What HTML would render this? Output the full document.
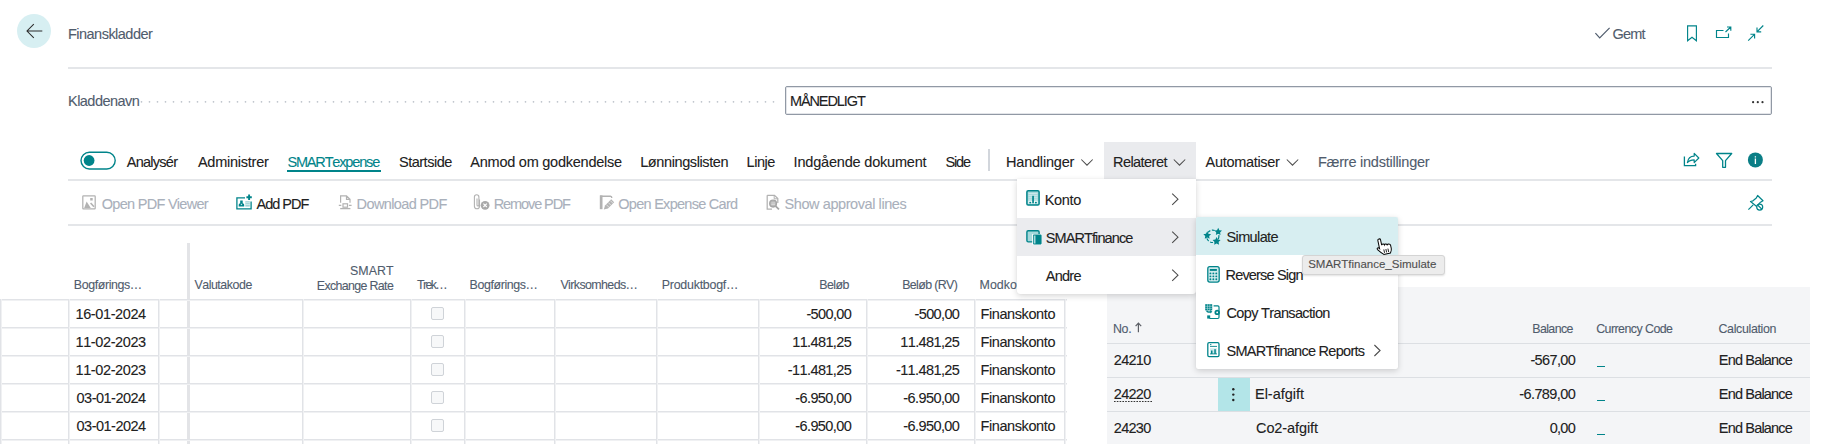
<!DOCTYPE html>
<html><head><meta charset="utf-8"><style>
html,body{margin:0;padding:0;background:#fff;width:1840px;height:444px;overflow:hidden;position:relative}
body{font-family:"Liberation Sans", sans-serif}
.t{position:absolute;white-space:nowrap;line-height:1.117;font-kerning:none;-webkit-text-stroke:0.1px currentColor}
</style></head><body>
<div style="position:absolute;left:17px;top:14px;width:34px;height:34px;border-radius:50%;background:#d7eff2"></div>
<svg style="position:absolute;left:0;top:0" width="60" height="60"><path d="M42.3 31H27.2 M33.8 24.2 L27 31 L33.8 37.8" fill="none" stroke="#2b2b2b" stroke-width="1.05"/></svg>
<div class="t" style="left:68.00px;top:26.00px;font-size:14.5px;color:#505c6d;letter-spacing:-0.521px;">Finanskladder</div>
<svg style="position:absolute;left:1580px;top:15px" width="200" height="40"><path d="M15.4 18.2 L19.7 22.9 L29.6 12.9" fill="none" stroke="#505c6d" stroke-width="1.2"/></svg>
<div class="t" style="left:1612.60px;top:26.00px;font-size:14.5px;color:#505c6d;letter-spacing:-0.874px;">Gemt</div>
<svg style="position:absolute;left:1680px;top:20px" width="100" height="30" fill="none" stroke="#00848a" stroke-width="1.15"><path d="M7.6 20.8 V5.9 H16.4 V20.8 L12 17.3 Z" stroke-linejoin="miter"/><path d="M43.5 10.5 H36.5 V17.5 H48.5 V13.5 M45.5 12 L50.8 7 M47 7 H50.8 V10.8"/><path d="M83.3 5.5 L77.2 11.6 M77 7.6 V11.8 H81.2 M68.2 20.6 L74.5 14.3 M70.4 14.2 H74.6 V18.4"/></svg>
<div style="position:absolute;left:68px;top:67px;width:1704px;height:2px;background:#e4e6e9;"></div>
<div class="t" style="left:68.00px;top:93.00px;font-size:14.5px;color:#505c6d;letter-spacing:-0.536px;">Kladdenavn</div>
<svg style="position:absolute;left:0;top:95px" width="800" height="12" fill="#bcc2ca"><circle cx="141.5" cy="6.8" r="0.85"/><circle cx="149.5" cy="6.8" r="0.85"/><circle cx="157.5" cy="6.8" r="0.85"/><circle cx="165.5" cy="6.8" r="0.85"/><circle cx="173.5" cy="6.8" r="0.85"/><circle cx="181.5" cy="6.8" r="0.85"/><circle cx="189.5" cy="6.8" r="0.85"/><circle cx="197.5" cy="6.8" r="0.85"/><circle cx="205.5" cy="6.8" r="0.85"/><circle cx="213.5" cy="6.8" r="0.85"/><circle cx="221.5" cy="6.8" r="0.85"/><circle cx="229.5" cy="6.8" r="0.85"/><circle cx="237.5" cy="6.8" r="0.85"/><circle cx="245.5" cy="6.8" r="0.85"/><circle cx="253.5" cy="6.8" r="0.85"/><circle cx="261.5" cy="6.8" r="0.85"/><circle cx="269.5" cy="6.8" r="0.85"/><circle cx="277.5" cy="6.8" r="0.85"/><circle cx="285.5" cy="6.8" r="0.85"/><circle cx="293.5" cy="6.8" r="0.85"/><circle cx="301.5" cy="6.8" r="0.85"/><circle cx="309.5" cy="6.8" r="0.85"/><circle cx="317.5" cy="6.8" r="0.85"/><circle cx="325.5" cy="6.8" r="0.85"/><circle cx="333.5" cy="6.8" r="0.85"/><circle cx="341.5" cy="6.8" r="0.85"/><circle cx="349.5" cy="6.8" r="0.85"/><circle cx="357.5" cy="6.8" r="0.85"/><circle cx="365.5" cy="6.8" r="0.85"/><circle cx="373.5" cy="6.8" r="0.85"/><circle cx="381.5" cy="6.8" r="0.85"/><circle cx="389.5" cy="6.8" r="0.85"/><circle cx="397.5" cy="6.8" r="0.85"/><circle cx="405.5" cy="6.8" r="0.85"/><circle cx="413.5" cy="6.8" r="0.85"/><circle cx="421.5" cy="6.8" r="0.85"/><circle cx="429.5" cy="6.8" r="0.85"/><circle cx="437.5" cy="6.8" r="0.85"/><circle cx="445.5" cy="6.8" r="0.85"/><circle cx="453.5" cy="6.8" r="0.85"/><circle cx="461.5" cy="6.8" r="0.85"/><circle cx="469.5" cy="6.8" r="0.85"/><circle cx="477.5" cy="6.8" r="0.85"/><circle cx="485.5" cy="6.8" r="0.85"/><circle cx="493.5" cy="6.8" r="0.85"/><circle cx="501.5" cy="6.8" r="0.85"/><circle cx="509.5" cy="6.8" r="0.85"/><circle cx="517.5" cy="6.8" r="0.85"/><circle cx="525.5" cy="6.8" r="0.85"/><circle cx="533.5" cy="6.8" r="0.85"/><circle cx="541.5" cy="6.8" r="0.85"/><circle cx="549.5" cy="6.8" r="0.85"/><circle cx="557.5" cy="6.8" r="0.85"/><circle cx="565.5" cy="6.8" r="0.85"/><circle cx="573.5" cy="6.8" r="0.85"/><circle cx="581.5" cy="6.8" r="0.85"/><circle cx="589.5" cy="6.8" r="0.85"/><circle cx="597.5" cy="6.8" r="0.85"/><circle cx="605.5" cy="6.8" r="0.85"/><circle cx="613.5" cy="6.8" r="0.85"/><circle cx="621.5" cy="6.8" r="0.85"/><circle cx="629.5" cy="6.8" r="0.85"/><circle cx="637.5" cy="6.8" r="0.85"/><circle cx="645.5" cy="6.8" r="0.85"/><circle cx="653.5" cy="6.8" r="0.85"/><circle cx="661.5" cy="6.8" r="0.85"/><circle cx="669.5" cy="6.8" r="0.85"/><circle cx="677.5" cy="6.8" r="0.85"/><circle cx="685.5" cy="6.8" r="0.85"/><circle cx="693.5" cy="6.8" r="0.85"/><circle cx="701.5" cy="6.8" r="0.85"/><circle cx="709.5" cy="6.8" r="0.85"/><circle cx="717.5" cy="6.8" r="0.85"/><circle cx="725.5" cy="6.8" r="0.85"/><circle cx="733.5" cy="6.8" r="0.85"/><circle cx="741.5" cy="6.8" r="0.85"/><circle cx="749.5" cy="6.8" r="0.85"/><circle cx="757.5" cy="6.8" r="0.85"/><circle cx="765.5" cy="6.8" r="0.85"/><circle cx="773.5" cy="6.8" r="0.85"/></svg>
<div style="position:absolute;left:785px;top:86px;width:985px;height:27px;border:1px solid #9199a5;border-radius:2px;background:#fff;box-shadow:inset 0 0 0 1px #e3e5e9"></div>
<div class="t" style="left:789.90px;top:93.00px;font-size:14.5px;color:#212121;letter-spacing:-1.092px;">MÅNEDLIGT</div>
<svg style="position:absolute;left:1748px;top:98px" width="20" height="8" fill="#333"><circle cx="5.1" cy="4.2" r="1.1"/><circle cx="9.8" cy="4.2" r="1.1"/><circle cx="14.5" cy="4.2" r="1.1"/></svg>
<svg style="position:absolute;left:70px;top:140px" width="60" height="40"><rect x="11" y="12.2" width="34.2" height="16.8" rx="8.4" fill="none" stroke="#00848a" stroke-width="1.4"/><circle cx="19.1" cy="20.5" r="5.4" fill="#00848a"/></svg>
<div class="t" style="left:126.80px;top:154.00px;font-size:14.5px;color:#212121;letter-spacing:-0.741px;">Analysér</div>
<div class="t" style="left:197.90px;top:154.00px;font-size:14.5px;color:#212121;letter-spacing:-0.239px;">Administrer</div>
<div class="t" style="left:287.40px;top:154.00px;font-size:14.5px;color:#00848a;letter-spacing:-1.155px;">SMARTexpense</div>
<div style="position:absolute;left:287px;top:170px;width:94px;height:2px;background:#00848a;"></div>
<div class="t" style="left:399.00px;top:154.00px;font-size:14.5px;color:#212121;letter-spacing:-0.495px;">Startside</div>
<div class="t" style="left:470.30px;top:154.00px;font-size:14.5px;color:#212121;letter-spacing:-0.238px;">Anmod om godkendelse</div>
<div class="t" style="left:640.20px;top:154.00px;font-size:14.5px;color:#212121;letter-spacing:-0.395px;">Lønningslisten</div>
<div class="t" style="left:746.60px;top:154.00px;font-size:14.5px;color:#212121;letter-spacing:-0.468px;">Linje</div>
<div class="t" style="left:793.60px;top:154.00px;font-size:14.5px;color:#212121;letter-spacing:-0.189px;">Indgående dokument</div>
<div class="t" style="left:945.40px;top:154.00px;font-size:14.5px;color:#212121;letter-spacing:-1.119px;">Side</div>
<div style="position:absolute;left:988px;top:149px;width:2px;height:22px;background:#d2d6dc;"></div>
<div style="position:absolute;left:1104px;top:142px;width:92px;height:37px;background:#eaebee;"></div>
<div class="t" style="left:1006.00px;top:154.00px;font-size:14.5px;color:#212121;letter-spacing:-0.200px;">Handlinger</div>
<div class="t" style="left:1113.00px;top:154.00px;font-size:14.5px;color:#212121;letter-spacing:-0.551px;">Relateret</div>
<div class="t" style="left:1205.60px;top:154.00px;font-size:14.5px;color:#212121;letter-spacing:-0.314px;">Automatiser</div>
<div class="t" style="left:1318.00px;top:154.00px;font-size:14.5px;color:#505c6d;letter-spacing:-0.245px;">Færre indstillinger</div>
<svg style="position:absolute;left:0;top:0" width="1840" height="444" fill="none" stroke="#4d4d4d" stroke-width="1.05"><path d="M1081.3 159.5 L1087 165.2 L1092.7 159.5" /><path d="M1173.8 159.5 L1179.5 165.2 L1185.2 159.5" /><path d="M1286.8 159.5 L1292.5 165.2 L1298.2 159.5" /></svg>
<svg style="position:absolute;left:1680px;top:148px" width="100" height="24" fill="none" stroke="#00848a" stroke-width="1.3"><path d="M4.4 8.5 V17.6 H15.6 V15.8"/><path d="M7.4 14.6 C8 10.5 10.5 8.1 14.2 8.1 V5.4 L18.8 10 L14.2 14.6 V11.8 C11.5 11.8 9 12.5 7.4 14.6 Z" stroke-linejoin="round" stroke-width="1.2"/><path d="M36.5 5.5 H51.7 L45.5 12.6 V19.3 H42.7 V12.6 Z" stroke-linejoin="round"/></svg>
<svg style="position:absolute;left:1740px;top:145px" width="30" height="30"><circle cx="15.4" cy="14.9" r="7.5" fill="#0a7e86"/><path d="M15.4 11.3 V12.5 M15.4 13.6 V19" stroke="#fff" stroke-width="1.3"/></svg>
<div style="position:absolute;left:68px;top:179px;width:1704px;height:2px;background:#e4e6e9;"></div>
<div class="t" style="left:101.80px;top:196.00px;font-size:14.5px;color:#a9b0bb;letter-spacing:-0.716px;">Open PDF Viewer</div>
<div class="t" style="left:256.50px;top:196.00px;font-size:14.5px;color:#212121;letter-spacing:-0.995px;">Add PDF</div>
<div class="t" style="left:356.60px;top:196.00px;font-size:14.5px;color:#a9b0bb;letter-spacing:-0.623px;">Download PDF</div>
<div class="t" style="left:493.70px;top:196.00px;font-size:14.5px;color:#a9b0bb;letter-spacing:-1.085px;">Remove PDF</div>
<div class="t" style="left:618.30px;top:196.00px;font-size:14.5px;color:#a9b0bb;letter-spacing:-0.726px;">Open Expense Card</div>
<div class="t" style="left:784.60px;top:196.00px;font-size:14.5px;color:#a9b0bb;letter-spacing:-0.423px;">Show approval lines</div>
<svg style="position:absolute;left:0;top:0" width="1840" height="444" fill="none" stroke="#b2b2b2" stroke-width="1.25"><rect x="82.8" y="195.8" width="12.4" height="13" rx="0.6"/><path d="M84.2 208 L86.6 201.5 L90.8 208 Z" fill="#b2b2b2" stroke="none"/><path d="M90.6 203 L94 206.8" stroke-width="1.6"/><rect x="90.2" y="198" width="2.5" height="2.5" fill="#b2b2b2" stroke="none"/><path d="M340.6 202.8 V195.8 H346.5 L350 199.3 V202.8 M346.5 195.8 V199.3 H350" stroke-width="1.2"/><path d="M338.8 205.4 H341.3 M348.9 205.4 H351.6" stroke-width="1.3"/><rect x="343" y="203.8" width="4.5" height="3.4" stroke-width="1.2"/><path d="M340.2 208.6 H350.4" stroke-width="1.3"/><path d="M479.5 199.5 V206.2 A2.55 2.55 0 0 1 474.4 206.2 V197 A2.25 2.25 0 0 1 478.9 197 V205 A0.95 0.95 0 0 1 477 205 V198.5" stroke-width="1.1"/><circle cx="485.1" cy="205.3" r="4.4" fill="#a9a9a9" stroke="none"/><path d="M483.4 203.6 L486.8 207 M486.8 203.6 L483.4 207" stroke="#fff" stroke-width="1.1"/><rect x="599.8" y="195.4" width="2.7" height="13.8" fill="#b2b2b2" stroke="none"/><path d="M600 196.2 H610.5 C611.5 196.2 611.8 197 611.8 198" stroke-width="1.4"/><path d="M603.8 209.4 L605 205.4 L611.2 199.2 L614.2 202.2 L608 208.4 Z" fill="#b4b4b4" stroke="none"/><path d="M606.3 204.6 L609.1 207.4 M608.3 202.6 L611.1 205.4 M610.3 200.6 L613.1 203.4" stroke="#fff" stroke-width="0.6"/><path d="M767.2 195.3 H774.5 L777.8 198.6 V203 M767.2 195.3 V209 H772" stroke-width="1.25"/><path d="M774.2 195.5 V198.8 H777.6" stroke-width="1"/><circle cx="773.1" cy="203.6" r="3.4" fill="#b8b8b8" stroke="#a5a5a5" stroke-width="1.3"/><path d="M771.3 203 H775 M771.3 204.6 H775" stroke="#e8e8e8" stroke-width="0.7"/><path d="M775.6 206.2 L779 209.3" stroke="#a5a5a5" stroke-width="1.8"/></svg>
<svg style="position:absolute;left:0;top:0" width="1840" height="444"><path d="M245 197.9 H236.9 V208.9 H251.1 V201.5" fill="none" stroke="#00848a" stroke-width="1.3"/><path d="M238.7 206.6 V205 C238.7 204 239.5 203.5 240.2 203.3 V200.4 H242.7 V203.3 C243.4 203.5 244.2 204 244.2 205 V206.6 Z" fill="#00848a"/><rect x="240.8" y="203.8" width="1.3" height="1.3" fill="#bfe3e5"/><rect x="245.3" y="201.2" width="4.5" height="5.4" fill="#9ed3d6"/><path d="M245.3 202.7 H249.8 M245.3 204.5 H249.8" stroke="#fff" stroke-width="0.5"/><path d="M249.1 194.5 V199.9 M246.4 197.2 H251.8" stroke="#00848a" stroke-width="1.9"/></svg>
<svg style="position:absolute;left:0;top:0" width="1840" height="444" fill="none" stroke="#00848a" stroke-width="1.2"><path d="M1748.4 209.6 L1753.2 204.8"/><path d="M1750.5 201.5 L1753 200.8 L1756.3 198 L1757.6 195.5 L1763 200.8 L1760.5 202.2 L1758 204.8 L1757.3 207 Z" stroke-linejoin="round"/><circle cx="1759.7" cy="207.1" r="3" fill="#fff"/><path d="M1757.6 205 L1761.8 209.2"/></svg>
<div style="position:absolute;left:68px;top:224px;width:1704px;height:2px;background:#e4e6e9;"></div>
<div style="position:absolute;left:187px;top:243px;width:3px;height:201px;background:#e3e4e7;"></div>
<div style="position:absolute;left:0px;top:299px;width:1067px;height:1px;background:#e1e3e7;"></div>
<div style="position:absolute;left:0px;top:300px;width:1067px;height:1px;background:#f0f1f3;"></div>
<div style="position:absolute;left:0px;top:327px;width:1067px;height:1px;background:#e1e3e7;"></div>
<div style="position:absolute;left:0px;top:328px;width:1067px;height:1px;background:#f0f1f3;"></div>
<div style="position:absolute;left:0px;top:355px;width:1067px;height:1px;background:#e1e3e7;"></div>
<div style="position:absolute;left:0px;top:356px;width:1067px;height:1px;background:#f0f1f3;"></div>
<div style="position:absolute;left:0px;top:383px;width:1067px;height:1px;background:#e1e3e7;"></div>
<div style="position:absolute;left:0px;top:384px;width:1067px;height:1px;background:#f0f1f3;"></div>
<div style="position:absolute;left:0px;top:411px;width:1067px;height:1px;background:#e1e3e7;"></div>
<div style="position:absolute;left:0px;top:412px;width:1067px;height:1px;background:#f0f1f3;"></div>
<div style="position:absolute;left:0px;top:439px;width:1067px;height:1px;background:#e1e3e7;"></div>
<div style="position:absolute;left:0px;top:440px;width:1067px;height:1px;background:#f0f1f3;"></div>
<div style="position:absolute;left:0px;top:299px;width:1px;height:145px;background:#e1e3e7;"></div>
<div style="position:absolute;left:1px;top:299px;width:1px;height:145px;background:#f0f1f3;"></div>
<div style="position:absolute;left:68px;top:299px;width:1px;height:145px;background:#e1e3e7;"></div>
<div style="position:absolute;left:69px;top:299px;width:1px;height:145px;background:#f0f1f3;"></div>
<div style="position:absolute;left:158px;top:299px;width:1px;height:145px;background:#e1e3e7;"></div>
<div style="position:absolute;left:159px;top:299px;width:1px;height:145px;background:#f0f1f3;"></div>
<div style="position:absolute;left:302px;top:299px;width:1px;height:145px;background:#e1e3e7;"></div>
<div style="position:absolute;left:303px;top:299px;width:1px;height:145px;background:#f0f1f3;"></div>
<div style="position:absolute;left:410px;top:299px;width:1px;height:145px;background:#e1e3e7;"></div>
<div style="position:absolute;left:411px;top:299px;width:1px;height:145px;background:#f0f1f3;"></div>
<div style="position:absolute;left:464px;top:299px;width:1px;height:145px;background:#e1e3e7;"></div>
<div style="position:absolute;left:465px;top:299px;width:1px;height:145px;background:#f0f1f3;"></div>
<div style="position:absolute;left:554px;top:299px;width:1px;height:145px;background:#e1e3e7;"></div>
<div style="position:absolute;left:555px;top:299px;width:1px;height:145px;background:#f0f1f3;"></div>
<div style="position:absolute;left:656px;top:299px;width:1px;height:145px;background:#e1e3e7;"></div>
<div style="position:absolute;left:657px;top:299px;width:1px;height:145px;background:#f0f1f3;"></div>
<div style="position:absolute;left:758px;top:299px;width:1px;height:145px;background:#e1e3e7;"></div>
<div style="position:absolute;left:759px;top:299px;width:1px;height:145px;background:#f0f1f3;"></div>
<div style="position:absolute;left:866px;top:299px;width:1px;height:145px;background:#e1e3e7;"></div>
<div style="position:absolute;left:867px;top:299px;width:1px;height:145px;background:#f0f1f3;"></div>
<div style="position:absolute;left:974px;top:299px;width:1px;height:145px;background:#e1e3e7;"></div>
<div style="position:absolute;left:975px;top:299px;width:1px;height:145px;background:#f0f1f3;"></div>
<div style="position:absolute;left:1064px;top:299px;width:1px;height:145px;background:#e1e3e7;"></div>
<div style="position:absolute;left:1065px;top:299px;width:1px;height:145px;background:#f0f1f3;"></div>
<div class="t" style="left:73.80px;top:279.00px;font-size:12.4px;color:#505c6d;letter-spacing:-0.391px;">Bogførings…</div>
<div class="t" style="left:194.40px;top:279.00px;font-size:12.4px;color:#505c6d;letter-spacing:-0.457px;">Valutakode</div>
<div class="t" style="left:350.10px;top:265.00px;font-size:12.4px;color:#505c6d;letter-spacing:0.000px;">SMART</div>
<div class="t" style="left:316.80px;top:280.00px;font-size:12.4px;color:#505c6d;letter-spacing:-0.645px;">Exchange Rate</div>
<div class="t" style="left:417.00px;top:279.00px;font-size:12.4px;color:#505c6d;letter-spacing:-1.620px;">Trek…</div>
<div class="t" style="left:469.50px;top:279.00px;font-size:12.4px;color:#505c6d;letter-spacing:-0.381px;">Bogførings…</div>
<div class="t" style="left:560.40px;top:279.00px;font-size:12.4px;color:#505c6d;letter-spacing:-0.583px;">Virksomheds…</div>
<div class="t" style="left:661.70px;top:279.00px;font-size:12.4px;color:#505c6d;letter-spacing:-0.220px;">Produktbogf…</div>
<div class="t" style="left:819.30px;top:279.00px;font-size:12.4px;color:#505c6d;letter-spacing:-0.544px;">Beløb</div>
<div class="t" style="left:902.20px;top:279.00px;font-size:12.4px;color:#505c6d;letter-spacing:-0.628px;">Beløb (RV)</div>
<div class="t" style="left:979.60px;top:279.00px;font-size:12.4px;color:#505c6d;letter-spacing:0.000px;">Modkontotype</div>
<div class="t" style="left:75.50px;top:306.00px;font-size:14.5px;color:#212121;letter-spacing:-0.390px;">16-01-2024</div>
<div class="t" style="left:806.42px;top:306.00px;font-size:14.5px;color:#212121;letter-spacing:-0.638px;">-500,00</div>
<div class="t" style="left:914.52px;top:306.00px;font-size:14.5px;color:#212121;letter-spacing:-0.638px;">-500,00</div>
<div class="t" style="left:980.50px;top:306.00px;font-size:14.5px;color:#212121;letter-spacing:-0.403px;">Finanskonto</div>
<div style="position:absolute;left:431px;top:307px;width:11px;height:11px;border:1px solid #cfd3d8;border-radius:2px;background:#f7f8f9"></div>
<div class="t" style="left:75.50px;top:334.00px;font-size:14.5px;color:#212121;letter-spacing:-0.390px;">11-02-2023</div>
<div class="t" style="left:792.21px;top:334.00px;font-size:14.5px;color:#212121;letter-spacing:-0.619px;">11.481,25</div>
<div class="t" style="left:900.31px;top:334.00px;font-size:14.5px;color:#212121;letter-spacing:-0.619px;">11.481,25</div>
<div class="t" style="left:980.50px;top:334.00px;font-size:14.5px;color:#212121;letter-spacing:-0.403px;">Finanskonto</div>
<div style="position:absolute;left:431px;top:335px;width:11px;height:11px;border:1px solid #cfd3d8;border-radius:2px;background:#f7f8f9"></div>
<div class="t" style="left:75.50px;top:362.00px;font-size:14.5px;color:#212121;letter-spacing:-0.390px;">11-02-2023</div>
<div class="t" style="left:787.83px;top:362.00px;font-size:14.5px;color:#212121;letter-spacing:-0.600px;">-11.481,25</div>
<div class="t" style="left:895.93px;top:362.00px;font-size:14.5px;color:#212121;letter-spacing:-0.600px;">-11.481,25</div>
<div class="t" style="left:980.50px;top:362.00px;font-size:14.5px;color:#212121;letter-spacing:-0.403px;">Finanskonto</div>
<div style="position:absolute;left:431px;top:363px;width:11px;height:11px;border:1px solid #cfd3d8;border-radius:2px;background:#f7f8f9"></div>
<div class="t" style="left:76.50px;top:390.00px;font-size:14.5px;color:#212121;letter-spacing:-0.501px;">03-01-2024</div>
<div class="t" style="left:795.27px;top:390.00px;font-size:14.5px;color:#212121;letter-spacing:-0.597px;">-6.950,00</div>
<div class="t" style="left:903.37px;top:390.00px;font-size:14.5px;color:#212121;letter-spacing:-0.597px;">-6.950,00</div>
<div class="t" style="left:980.50px;top:390.00px;font-size:14.5px;color:#212121;letter-spacing:-0.403px;">Finanskonto</div>
<div style="position:absolute;left:431px;top:391px;width:11px;height:11px;border:1px solid #cfd3d8;border-radius:2px;background:#f7f8f9"></div>
<div class="t" style="left:76.50px;top:418.00px;font-size:14.5px;color:#212121;letter-spacing:-0.501px;">03-01-2024</div>
<div class="t" style="left:795.27px;top:418.00px;font-size:14.5px;color:#212121;letter-spacing:-0.597px;">-6.950,00</div>
<div class="t" style="left:903.37px;top:418.00px;font-size:14.5px;color:#212121;letter-spacing:-0.597px;">-6.950,00</div>
<div class="t" style="left:980.50px;top:418.00px;font-size:14.5px;color:#212121;letter-spacing:-0.403px;">Finanskonto</div>
<div style="position:absolute;left:431px;top:419px;width:11px;height:11px;border:1px solid #cfd3d8;border-radius:2px;background:#f7f8f9"></div>
<div style="position:absolute;left:1107px;top:287px;width:702.5px;height:157px;background:#f4f5f7;"></div>
<div style="position:absolute;left:1107px;top:343px;width:702.5px;height:1px;background:#dcdfe3;"></div>
<div style="position:absolute;left:1107px;top:377px;width:702.5px;height:1px;background:#dcdfe3;"></div>
<div style="position:absolute;left:1107px;top:411px;width:702.5px;height:1px;background:#dcdfe3;"></div>
<div class="t" style="left:1112.90px;top:323.00px;font-size:12.4px;color:#505c6d;letter-spacing:-0.270px;">No.</div>
<svg style="position:absolute;left:0;top:0" width="1840" height="444" fill="none" stroke="#5c5f66" stroke-width="1.2"><path d="M1138.4 323.2 V332.3 M1135.6 326.2 L1138.4 323.1 L1141.2 326.2"/></svg>
<div class="t" style="left:1532.30px;top:323.00px;font-size:12.4px;color:#505c6d;letter-spacing:-0.614px;">Balance</div>
<div class="t" style="left:1596.20px;top:323.00px;font-size:12.4px;color:#505c6d;letter-spacing:-0.545px;">Currency Code</div>
<div class="t" style="left:1718.50px;top:323.00px;font-size:12.4px;color:#505c6d;letter-spacing:-0.331px;">Calculation</div>
<div style="position:absolute;left:1217.5px;top:377.5px;width:32px;height:33.5px;background:#b3e5e8;"></div>
<svg style="position:absolute;left:1225px;top:385px" width="16" height="20" fill="#222"><circle cx="8.3" cy="4.2" r="1.2"/><circle cx="8.3" cy="9.6" r="1.2"/><circle cx="8.3" cy="15" r="1.2"/></svg>
<div class="t" style="left:1113.80px;top:352.00px;font-size:14.5px;color:#212121;letter-spacing:-0.714px;">24210</div>
<div class="t" style="left:1530.42px;top:352.00px;font-size:14.5px;color:#212121;letter-spacing:-0.638px;">-567,00</div>
<div style="position:absolute;left:1596.8px;top:365.79999999999995px;width:8.1px;height:1.2px;background:#00848a;"></div>
<div class="t" style="left:1718.80px;top:352.00px;font-size:14.5px;color:#212121;letter-spacing:-0.816px;">End Balance</div>
<div class="t" style="left:1113.80px;top:386.00px;font-size:14.5px;color:#212121;letter-spacing:-0.714px;">24220</div>
<div class="t" style="left:1255.00px;top:386.00px;font-size:14.5px;color:#212121;letter-spacing:-0.016px;">El-afgift</div>
<div class="t" style="left:1519.27px;top:386.00px;font-size:14.5px;color:#212121;letter-spacing:-0.597px;">-6.789,00</div>
<div style="position:absolute;left:1596.8px;top:399.79999999999995px;width:8.1px;height:1.2px;background:#00848a;"></div>
<div class="t" style="left:1718.80px;top:386.00px;font-size:14.5px;color:#212121;letter-spacing:-0.816px;">End Balance</div>
<div class="t" style="left:1113.80px;top:420.00px;font-size:14.5px;color:#212121;letter-spacing:-0.714px;">24230</div>
<div class="t" style="left:1256.00px;top:420.00px;font-size:14.5px;color:#212121;letter-spacing:-0.093px;">Co2-afgift</div>
<div class="t" style="left:1549.74px;top:420.00px;font-size:14.5px;color:#212121;letter-spacing:-0.732px;">0,00</div>
<div style="position:absolute;left:1596.8px;top:433.79999999999995px;width:8.1px;height:1.2px;background:#00848a;"></div>
<div class="t" style="left:1718.80px;top:420.00px;font-size:14.5px;color:#212121;letter-spacing:-0.816px;">End Balance</div>
<svg style="position:absolute;left:0;top:0" width="1840" height="444"><path d="M1114 401.5 H1152" stroke="#333" stroke-width="1" stroke-dasharray="1.6 1.2"/></svg>
<div style="position:absolute;left:1016.5px;top:179px;width:179.5px;height:115px;background:#fff;border-radius:0 0 3px 3px;box-shadow:0 2px 6px rgba(0,0,0,0.16),0 0 1px rgba(0,0,0,0.1)"></div>
<div style="position:absolute;left:1016.5px;top:218px;width:179.5px;height:38px;background:#ebecef;"></div>
<div class="t" style="left:1044.70px;top:192.00px;font-size:14.5px;color:#212121;letter-spacing:-0.332px;">Konto</div>
<div class="t" style="left:1045.70px;top:230.00px;font-size:14.5px;color:#212121;letter-spacing:-0.895px;">SMARTfinance</div>
<div class="t" style="left:1045.70px;top:268.00px;font-size:14.5px;color:#212121;letter-spacing:-0.707px;">Andre</div>
<div style="position:absolute;left:1196px;top:217px;width:202px;height:151.5px;background:#fff;border-radius:2px;box-shadow:0 2px 6px rgba(0,0,0,0.16),0 0 1px rgba(0,0,0,0.1)"></div>
<div style="position:absolute;left:1196px;top:217px;width:202px;height:38px;background:#d7eef1;border-radius:2px 2px 0 0"></div>
<div class="t" style="left:1226.50px;top:229.00px;font-size:14.5px;color:#212121;letter-spacing:-0.621px;">Simulate</div>
<div class="t" style="left:1225.50px;top:267.00px;font-size:14.5px;color:#212121;letter-spacing:-0.816px;">Reverse Sign</div>
<div class="t" style="left:1226.50px;top:305.00px;font-size:14.5px;color:#212121;letter-spacing:-0.651px;">Copy Transaction</div>
<div class="t" style="left:1226.50px;top:343.00px;font-size:14.5px;color:#212121;letter-spacing:-0.724px;">SMARTfinance Reports</div>
<svg style="position:absolute;left:0;top:0;z-index:5" width="1840" height="444" fill="none" stroke="#4a4a4a" stroke-width="1.05"><path d="M1172.2 193.6 L1178 199.2 L1172.2 204.79999999999998"/><path d="M1172.2 231.6 L1178 237.2 L1172.2 242.79999999999998"/><path d="M1172.2 269.59999999999997 L1178 275.2 L1172.2 280.8"/><path d="M1374.4 345 L1380.1 350.5 L1374.4 356"/></svg>
<svg style="position:absolute;left:0;top:0;z-index:5" width="1840" height="444" fill="none" stroke="#00848a"><rect x="1026.9" y="190.8" width="12.2" height="14.2" rx="1.3" fill="#a6d8db" stroke-width="1.5"/><path d="M1028.5 193.5 H1037.5 M1028.5 195.4 H1037.5 M1028.5 197.3 H1037.5 M1028.5 199.2 H1037.5" stroke="#e6f4f5" stroke-width="0.6"/><rect x="1028.4" y="200.7" width="9.2" height="3" fill="#fff" stroke="none"/><rect x="1032.2" y="195.8" width="1.7" height="7.5" fill="#00848a" stroke="none"/><rect x="1029.3" y="201.8" width="1.9" height="1.6" fill="#00848a" stroke="none"/><rect x="1034.9" y="201.8" width="1.9" height="1.6" fill="#00848a" stroke="none"/><rect x="1026.9" y="230.7" width="12.2" height="11.2" rx="1.3" fill="#a6d8db" stroke-width="1.4"/><rect x="1032.2" y="234" width="9.6" height="10.8" fill="#fff" stroke="none"/><rect x="1033" y="234.6" width="8.6" height="9.8" rx="0.8" fill="#00848a" stroke="none"/><rect x="1033.7" y="235.5" width="1.8" height="8" fill="#a6d8db" stroke="none"/><circle cx="1212.7" cy="236.3" r="6.2" stroke-width="1.2" stroke-dasharray="3 1.6"/></svg>
<svg style="position:absolute;left:0;top:0;z-index:5" width="1840" height="444" fill="#00848a" stroke="none"><polygon points="1207.20,231.30 1208.40,233.74 1211.10,234.13 1209.15,236.03 1209.61,238.72 1207.20,237.45 1204.79,238.72 1205.25,236.03 1203.30,234.13 1206.00,233.74"/><polygon points="1218.20,227.80 1219.38,230.18 1222.00,230.56 1220.10,232.42 1220.55,235.04 1218.20,233.80 1215.85,235.04 1216.30,232.42 1214.40,230.56 1217.02,230.18"/><polygon points="1216.60,237.10 1217.83,239.60 1220.59,240.00 1218.60,241.95 1219.07,244.70 1216.60,243.40 1214.13,244.70 1214.60,241.95 1212.61,240.00 1215.37,239.60"/></svg>
<svg style="position:absolute;left:0;top:0;z-index:5" width="1840" height="444" fill="none" stroke="#00848a" stroke-width="1.3"><rect x="1207.8" y="266.7" width="11.4" height="15.4" rx="2" fill="#cfeaec"/><rect x="1209.8" y="269" width="7.1" height="1.9" fill="#00848a" stroke="none"/><circle cx="1210.40" cy="273.40" r="0.95" fill="#00848a" stroke="none"/><circle cx="1210.40" cy="276.35" r="0.95" fill="#00848a" stroke="none"/><circle cx="1210.40" cy="279.30" r="0.95" fill="#00848a" stroke="none"/><circle cx="1213.35" cy="273.40" r="0.95" fill="#00848a" stroke="none"/><circle cx="1213.35" cy="276.35" r="0.95" fill="#00848a" stroke="none"/><circle cx="1213.35" cy="279.30" r="0.95" fill="#00848a" stroke="none"/><circle cx="1216.30" cy="273.40" r="0.95" fill="#00848a" stroke="none"/><circle cx="1216.30" cy="276.35" r="0.95" fill="#00848a" stroke="none"/><circle cx="1216.30" cy="279.30" r="0.95" fill="#00848a" stroke="none"/><rect x="1205.2" y="304.2" width="7" height="6.2" fill="#00848a" stroke="none"/><path d="M1207.5 304.2 V310.4 M1209.8 304.2 V310.4 M1205.2 306.3 H1212.2 M1205.2 308.4 H1212.2" stroke="#c8e7e9" stroke-width="0.5"/><path d="M1206.6 310.6 C1207.4 312.3 1209.3 312.3 1210.6 311.6" stroke-width="1.3"/><path d="M1210 309.9 L1212.4 311.7 L1210.3 313.6 Z" fill="#00848a" stroke="none"/><path d="M1213.6 305.8 H1217.8 Q1219 305.8 1219 307 V317.3 Q1219 318.5 1217.8 318.5 H1209.5" stroke-width="1.2"/><circle cx="1217.2" cy="312.4" r="1.8" stroke-width="1.8"/><rect x="1207.2" y="315.4" width="3" height="3.2" fill="#00848a" stroke="none"/><rect x="1207.8" y="342.6" width="11.2" height="14" rx="1.3" fill="#fff" stroke-width="1.3"/><path d="M1210 344.6 H1211.4 M1210 346.4 H1217" stroke-width="0.9"/><rect x="1210" y="348.3" width="7" height="5.6" fill="#cfeaec" stroke="none"/><rect x="1211" y="350.5" width="1.5" height="3.4" fill="#00848a" stroke="none"/><rect x="1214.3" y="349.2" width="1.5" height="4.7" fill="#00848a" stroke="none"/><path d="M1210 353.9 H1217" stroke-width="0.9"/></svg>
<div style="position:absolute;z-index:6;left:1301.5px;top:254.7px;width:141.5px;height:18.3px;background:#ececec;border:0.5px solid #d4d4d4;border-radius:3px;box-shadow:0 1px 2px rgba(0,0,0,0.12)"></div>
<div class="t" style="left:1308.20px;top:258.00px;font-size:11.5px;color:#4f4f4f;letter-spacing:-0.014px;z-index:7;">SMARTfinance_Simulate</div>
<svg style="position:absolute;left:1372.5px;top:234px;z-index:8" width="26" height="26"><g transform="rotate(-12 12 20)"><path d="M7.8 5.2 C7.8 3.6 10.6 3.6 10.6 5.2 V10.6 C11 9.6 13.2 9.6 13.4 10.9 C13.8 10 15.8 10.1 16 11.4 C16.5 10.7 19.2 10.9 19.3 12.6 V15.8 C19.3 17.9 18.3 19.1 17.5 20.2 H10.8 C9 18.5 7.2 16.5 5.6 14.2 C4.8 12.9 6.4 11.8 7.3 12.9 L7.8 13.6 Z" fill="#fff" stroke="#000" stroke-width="1"/><path d="M11.8 15.3 V18.8 M13.9 15.3 V18.8 M16 15.3 V18.8" stroke="#000" stroke-width="0.8"/></g></svg>
</body></html>
